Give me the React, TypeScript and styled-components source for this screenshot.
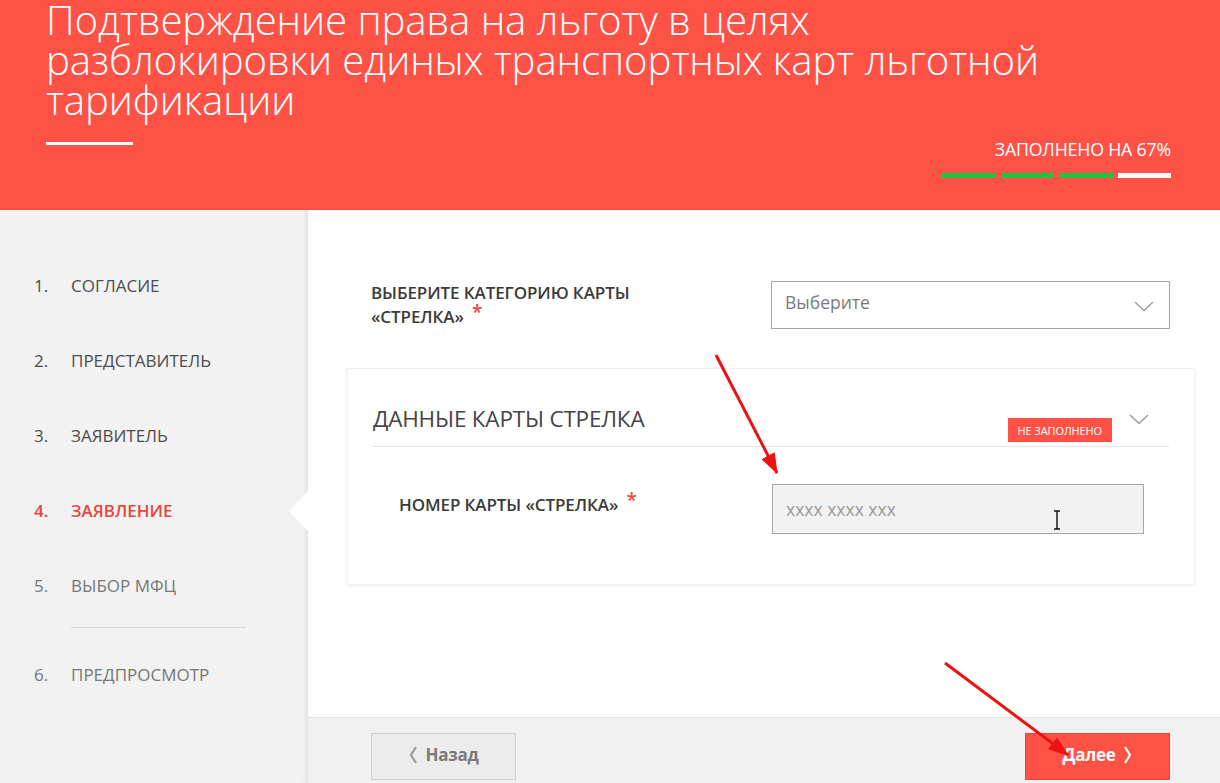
import styled, { createGlobalStyle } from 'styled-components'

const GlobalStyle = createGlobalStyle`
	html, body {
		margin: 0;
		padding: 0;
		background: #ffffff;
		font-family: 'Open Sans', 'Liberation Sans', sans-serif;
	}
	* {
		box-sizing: border-box;
	}
`

type StepProps = {
	$state: 'done' | 'active' | 'todo'
}

type ButtonProps = {
	$primary?: boolean
}

type OffsetProps = {
	$offset?: number
}

const steps: { num: string; title: string; state: 'done' | 'active' | 'todo' }[] = [
	{ num: '1.', title: 'СОГЛАСИЕ', state: 'done' },
	{ num: '2.', title: 'ПРЕДСТАВИТЕЛЬ', state: 'done' },
	{ num: '3.', title: 'ЗАЯВИТЕЛЬ', state: 'done' },
	{ num: '4.', title: 'ЗАЯВЛЕНИЕ', state: 'active' },
	{ num: '5.', title: 'ВЫБОР МФЦ', state: 'todo' },
]

const progress = [true, true, true, false]

function Chevron({ dir = 'down', color = '#9a9a9a' }: { dir?: 'down' | 'left' | 'right'; color?: string }) {
	if (dir === 'down') {
		return (
			<svg width="20" height="11" viewBox="0 0 20 11">
				<polyline points="1,1 10,9.5 19,1" fill="none" stroke={color} strokeWidth="1.3" />
			</svg>
		)
	}
	const pts = dir === 'left' ? '7,1 2,9 7,17' : '2,1 7,9 2,17'
	return (
		<svg width="9" height="18" viewBox="0 0 9 18">
			<polyline points={pts} fill="none" stroke={color} strokeWidth="2.2" />
		</svg>
	)
}

function App() {
	return (
		<Page>
			<GlobalStyle />
			<Header>
				<Title>
					Подтверждение права на льготу в целях разблокировки единых транспортных карт
					льготной тарификации
				</Title>
				<HeaderBottom>
					<Underline />
					<Progress>
						<p>ЗАПОЛНЕНО НА 67%</p>
						<div className="bars">
							{progress.map((filled, i) => (
								<Bar key={i} $filled={filled} />
							))}
						</div>
					</Progress>
				</HeaderBottom>
			</Header>

			<Body>
				<Sidebar>
					{steps.map((s) => (
						<Step key={s.num} $state={s.state}>
							<span className="num">{s.num}</span>
							<span>{s.title}</span>
						</Step>
					))}
					<StepDivider />
					<Step $state="todo">
						<span className="num">6.</span>
						<span>ПРЕДПРОСМОТР</span>
					</Step>
				</Sidebar>

				<Main>
					<Content>
						<FieldRow>
							<Label>
								ВЫБЕРИТЕ КАТЕГОРИЮ КАРТЫ
								<br />
								«СТРЕЛКА» <Required>*</Required>
							</Label>
							<Select>
								<span>Выберите</span>
								<Chevron />
							</Select>
						</FieldRow>

						<Card>
							<CardHeader>
								<h2>ДАННЫЕ КАРТЫ СТРЕЛКА</h2>
								<Badge>НЕ ЗАПОЛНЕНО</Badge>
								<div className="toggle">
									<Chevron />
								</div>
							</CardHeader>
							<CardRow>
								<Label $offset={9}>
									НОМЕР КАРТЫ «СТРЕЛКА» <Required>*</Required>
								</Label>
								<Input>
									<span>xxxx xxxx xxx</span>
									<Caret viewBox="0 0 8 20" width="8" height="20">
										<path d="M1 1h2.5q0.5 0 0.5 1v16q0 1 -0.5 1H1M7 1H4.5q-0.5 0 -0.5 1v16q0 1 0.5 1H7" fill="none" stroke="#111" strokeWidth="1.4" />
									</Caret>
								</Input>
							</CardRow>
						</Card>
					</Content>

					<Footer>
						<NavButton>
							<Chevron dir="left" color="#9a9a9a" />
							Назад
						</NavButton>
						<NavButton $primary>
							Далее
							<Chevron dir="right" color="#ffffff" />
						</NavButton>
					</Footer>
				</Main>
			</Body>

			<Arrows width="1220" height="783" viewBox="0 0 1220 783">
				<defs>
					<marker id="head" markerWidth="7" markerHeight="5" refX="6.5" refY="2.5" orient="auto" markerUnits="strokeWidth">
						<path d="M0,0 L7,2.5 L0,5 z" fill="#ee1111" />
					</marker>
				</defs>
				<line x1="716" y1="355" x2="777" y2="473" stroke="#ee1111" strokeWidth="3" markerEnd="url(#head)" />
				<line x1="945" y1="663" x2="1068" y2="755" stroke="#ee1111" strokeWidth="3" markerEnd="url(#head)" />
			</Arrows>
		</Page>
	)
}

const Page = styled.div`
	position: relative;
	width: 1220px;
	height: 783px;
	overflow: hidden;
	display: flex;
	flex-direction: column;
`

const Header = styled.header`
	height: 210px;
	flex-shrink: 0;
	background: #fe5246;
	padding: 0 49px 0 46px;
	color: #ffffff;
	display: flex;
	flex-direction: column;
`

const Title = styled.h1`
	margin: 0;
	width: 1010px;
	font-size: 40.2px;
	line-height: 40px;
	font-weight: 300;
	letter-spacing: -0.1px;
`

const HeaderBottom = styled.div`
	display: flex;
	justify-content: space-between;
	align-items: flex-start;
`

const Underline = styled.div`
	width: 87px;
	height: 3px;
	margin-top: 22px;
	background: #ffffff;
`

const Progress = styled.div`
	display: flex;
	flex-direction: column;
	align-items: flex-end;
	margin-top: 18px;

	p {
		margin: 0;
		font-size: 17.8px;
		line-height: 22px;
		font-weight: 400;
		letter-spacing: -0.2px;
	}

	.bars {
		display: flex;
		gap: 5px;
		margin-top: 13px;
	}
`

const Bar = styled.span<{ $filled: boolean }>`
	width: 53.5px;
	height: 5px;
	background: ${({ $filled }) => ($filled ? '#1ec23c' : '#ffffff')};
`

const Body = styled.div`
	flex: 1;
	display: grid;
	grid-template-columns: 308px 1fr;
	min-height: 0;
`

const Sidebar = styled.nav`
	background: #f2f2f2;
	padding-top: 38px;
	box-shadow: inset -5px 0 5px -3px rgba(0, 0, 0, 0.07);
`

const Step = styled.div<StepProps>`
	position: relative;
	height: 75px;
	display: flex;
	align-items: center;
	padding-left: 34px;
	font-size: 17px;
	line-height: 20px;
	font-weight: ${({ $state }) => ($state === 'active' ? 600 : 400)};
	color: ${({ $state }) =>
		$state === 'active' ? '#e8453c' : $state === 'done' ? '#4d4d4d' : '#777777'};

	.num {
		width: 37px;
	}

	${({ $state }) =>
		$state === 'active' &&
		`
		&::after {
			content: '';
			position: absolute;
			right: 0;
			top: 50%;
			margin-top: -20px;
			border-top: 20px solid transparent;
			border-bottom: 20px solid transparent;
			border-right: 19px solid #ffffff;
		}
	`}
`

const StepDivider = styled.div`
	height: 1px;
	width: 175px;
	margin: 4px 0 9px 71px;
	background: #d4d4d4;
`

const Main = styled.main`
	display: flex;
	flex-direction: column;
	min-height: 0;
`

const Content = styled.div`
	flex: 1;
	padding: 71px 50px 0 63px;
`

const FieldRow = styled.div`
	display: grid;
	grid-template-columns: 400px 1fr;
	align-items: start;
`

const Label = styled.div<OffsetProps>`
	margin-top: ${({ $offset }) => $offset || 0}px;
	font-size: 17px;
	line-height: 24px;
	font-weight: 600;
	color: #3a3a3a;
	letter-spacing: -0.1px;
`

const Required = styled.span`
	color: #f0483e;
	font-size: 19px;
	line-height: 0;
	position: relative;
	top: -4px;
	margin-left: 4px;
`

const Select = styled.div`
	height: 48px;
	border: 1px solid #a6a6a6;
	background: #ffffff;
	display: flex;
	align-items: center;
	justify-content: space-between;
	padding: 0 15px 0 13px;
	font-size: 17.5px;
	color: #7a7a7a;

	span {
		margin-top: -6px;
	}

	svg {
		margin-top: 2px;
	}
`

const Card = styled.section`
	margin: 39px -25px 0 -24px;
	padding: 0 25px 50px 25px;
	background: #ffffff;
	border: 1px solid #f0f0f0;
	box-shadow: 0 1px 4px rgba(0, 0, 0, 0.06);
`

const CardHeader = styled.div`
	display: flex;
	align-items: flex-start;
	height: 78px;
	padding-top: 35px;
	border-bottom: 1px solid #e3e3e3;

	h2 {
		flex: 1;
		margin: 0;
		font-size: 22.5px;
		line-height: 30px;
		font-weight: 400;
		color: #454545;
		letter-spacing: -0.2px;
	}

	.toggle {
		margin: 10px 20px 0 17px;
		line-height: 0;
	}
`

const Badge = styled.span`
	margin-top: 14px;
	height: 24px;
	padding: 0 10px;
	display: flex;
	align-items: center;
	background: #fe5246;
	color: #ffffff;
	font-size: 11px;
	font-weight: 400;
	letter-spacing: -0.1px;
`

const CardRow = styled.div`
	display: grid;
	grid-template-columns: 373px 372px;
	padding: 37px 0 0 26px;
`

const Input = styled.div`
	position: relative;
	height: 50px;
	border: 1px solid #a6a6a6;
	background: #f2f2f2;
	display: flex;
	align-items: center;
	padding-left: 13px;
	font-size: 17.5px;
	color: #9a9a9a;
`

const Caret = styled.svg`
	position: absolute;
	left: 280px;
	top: 25px;
`

const Footer = styled.footer`
	height: 66px;
	flex-shrink: 0;
	background: #f1f1f1;
	border-top: 1px solid #e2e2e2;
	display: flex;
	justify-content: space-between;
	align-items: flex-start;
	padding: 15px 50px 0 63px;
`

const NavButton = styled.button<ButtonProps>`
	width: 145px;
	height: 47px;
	display: flex;
	align-items: center;
	justify-content: center;
	gap: 8px;
	font-family: 'Open Sans', 'Liberation Sans', sans-serif;
	font-size: 17px;
	font-weight: 700;
	letter-spacing: -0.3px;
	border: 1px solid ${({ $primary }) => ($primary ? '#e0443a' : '#cfcfcf')};
	background: ${({ $primary }) => ($primary ? '#fe5246' : '#ececec')};
	color: ${({ $primary }) => ($primary ? '#ffffff' : '#7a7a7a')};
	padding: 0 0 4px;
`

const Arrows = styled.svg`
	position: absolute;
	left: 0;
	top: 0;
	pointer-events: none;
`

export default App
